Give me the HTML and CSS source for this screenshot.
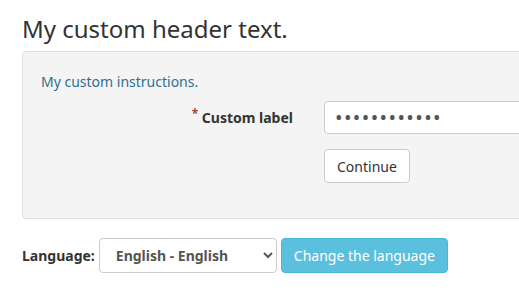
FILE: index.html
```html
<!DOCTYPE html>
<html lang="en">
<head>
    <meta charset="UTF-8">
    <title>Login</title>
    <link rel="stylesheet" href="styles.css">
</head>
<body>
    <h1 class="page-title">My custom header text.</h1>

    <div class="panel">
        <p class="instructions">My custom instructions.</p>
        <form class="login-form">
            <div class="form-row">
                <label class="form-label" for="secret"><span class="req">*</span> Custom label</label>
                <input class="form-input" type="password" id="secret" value="abcdefghijkl">
            </div>
            <div class="form-row">
                <span class="form-label"></span>
                <button type="button" class="btn-default">Continue</button>
            </div>
        </form>
    </div>

    <form class="lang-form">
        <label class="lang-label" for="lang">Language:</label>
        <select class="lang-select" id="lang">
            <option>English - English</option>
        </select>
        <button type="button" class="btn-info">Change the language</button>
    </form>
</body>
</html>
```

FILE: styles.css
```css
html, body {
    overflow: hidden;
}

body {
    font-family: "Noto Sans", sans-serif;
    font-size: 14px;
    color: #333;
    background: #fff;
    margin: 0;
    padding: 0 0 0 22px;
}

.page-title {
    font-size: 24px;
    font-weight: normal;
    margin: 0;
    padding-top: 12px;
    line-height: 34px;
}

.panel {
    background: #f4f4f4;
    border: 1px solid #ddd;
    border-radius: 4px;
    margin-top: 5px;
    margin-right: -20px;
    padding: 18px 18px 34px 18px;
    height: 114px;
}

.instructions {
    color: #2f6f91;
    margin: 0 0 7px 0;
    line-height: 24px;
}

.form-row {
    display: flex;
    align-items: center;
    margin-bottom: 15px;
}

.form-label {
    width: 283px;
    text-align: right;
    padding-right: 31px;
    font-weight: bold;
    box-sizing: border-box;
    flex-shrink: 0;
}

.req {
    color: #a94442;
    position: relative;
    top: -5px;
    font-size: 12px;
}

.form-input {
    flex: 1;
    height: 33px;
    box-sizing: border-box;
    border: 1px solid #ccc;
    border-radius: 4px;
    background: #fff;
    padding: 0 10px;
    font-family: inherit;
    font-size: 20px;
    letter-spacing: 1.4px;
    color: #555;
}

.btn-default {
    font-family: inherit;
    font-size: 14px;
    color: #333;
    background: #fff;
    border: 1px solid #ccc;
    border-radius: 4px;
    height: 34px;
    padding: 0 12px;
}

.lang-form {
    display: flex;
    align-items: center;
    margin-top: 19px;
}

.lang-label {
    font-weight: bold;
    font-size: 14px;
    margin-right: 4px;
}

.lang-select {
    width: 178px;
    height: 35px;
    font-family: inherit;
    font-size: 14px;
    font-weight: bold;
    color: #555;
    background: #fff;
    border: 1px solid #ccc;
    border-radius: 4px;
    padding: 0 12px;
    margin-right: 4px;
}

.btn-info {
    font-family: inherit;
    font-size: 14px;
    color: #fff;
    background: #5bc0de;
    border: 1px solid #46b8da;
    border-radius: 4px;
    height: 35px;
    padding: 0 12px;
}
```
